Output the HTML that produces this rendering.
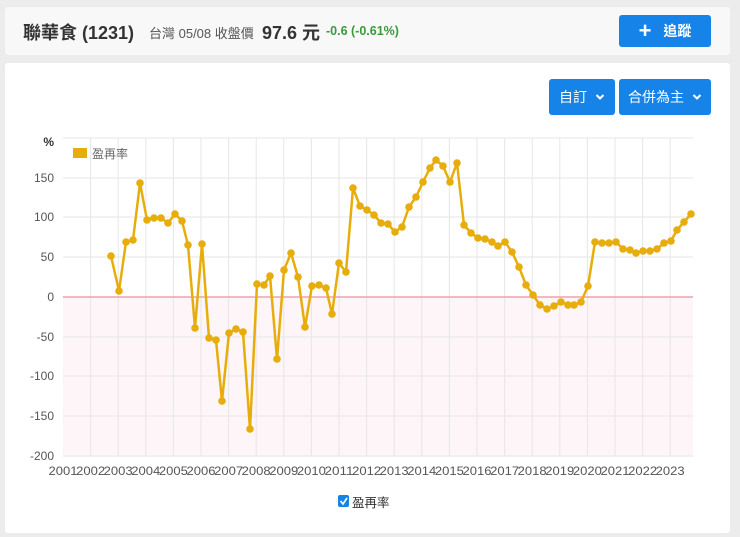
<!DOCTYPE html>
<html><head><meta charset="utf-8"><style>
body{margin:0;width:740px;height:537px;background:#ececec;font-family:"Liberation Sans","Noto Sans CJK TC",sans-serif;overflow:hidden;position:relative}
.card1{position:absolute;left:5px;top:7px;width:725px;height:48px;background:#f8f8f8;border-radius:3px}
.card2{position:absolute;left:5px;top:63px;width:725px;height:470px;background:#fff;border-radius:3px}
.btn{position:absolute;background:#1683e8;color:#fff;border-radius:3px;font-size:14px;font-weight:bold;display:flex;align-items:center;justify-content:center}
</style></head><body>
<div class="card1"></div>
<div style="position:absolute;left:23px;top:19px;font-size:18px;font-weight:bold;color:#333">聯華食 (1231)</div>
<div style="position:absolute;left:149px;top:23px;font-size:13px;color:#555">台灣 05/08 收盤價</div>
<div style="position:absolute;left:262px;top:19px;font-size:18px;font-weight:bold;color:#333">97.6 元</div>
<div style="position:absolute;left:326px;top:24px;font-size:12.5px;font-weight:bold;color:#3a9a3a">-0.6 (-0.61%)</div>
<div class="btn" style="left:619px;top:15px;width:92px;height:32px"><span style="font-size:22px;margin-right:12px;line-height:1">+</span>追蹤</div>
<div class="card2"></div>
<div class="btn" style="left:549px;top:79px;width:66px;height:36px;font-weight:normal">自訂<svg width="10" height="8" style="margin-left:8px"><path d="M1.5 2 L5 5.5 L8.5 2" stroke="#fff" stroke-width="2" fill="none"/></svg></div>
<div class="btn" style="left:619px;top:79px;width:92px;height:36px;font-weight:normal">合併為主<svg width="10" height="8" style="margin-left:8px"><path d="M1.5 2 L5 5.5 L8.5 2" stroke="#fff" stroke-width="2" fill="none"/></svg></div>
<svg style="position:absolute;left:0;top:0" width="740" height="537">
<rect x="63" y="297" width="630" height="159" fill="#fdf5f7"/>
<g stroke="#e6e6e6" stroke-width="1">
<line x1="63" y1="138" x2="693" y2="138"/><line x1="63" y1="178" x2="693" y2="178"/><line x1="63" y1="217" x2="693" y2="217"/><line x1="63" y1="257" x2="693" y2="257"/><line x1="63" y1="337" x2="693" y2="337"/><line x1="63" y1="376" x2="693" y2="376"/><line x1="63" y1="416" x2="693" y2="416"/><line x1="63" y1="456" x2="693" y2="456"/>
<g id="vg"></g>
</g>
<line x1="63" y1="297" x2="693" y2="297" stroke="#f0a0b0" stroke-width="1.5"/>
<g font-size="12" fill="#555" text-anchor="end">
<text x="54" y="146" font-weight="bold" fill="#333">%</text>
<text x="54" y="182">150</text><text x="54" y="221">100</text><text x="54" y="261">50</text><text x="54" y="301">0</text><text x="54" y="341">-50</text><text x="54" y="380">-100</text><text x="54" y="420">-150</text><text x="54" y="460">-200</text>
</g>
<g id="xl" font-size="11.5" fill="#555" text-anchor="middle"></g>
<rect x="73" y="148" width="14" height="10" fill="#e6ad0c"/>
<text x="92" y="158" font-size="12" fill="#666">盈再率</text>
<polyline id="pl" fill="none" stroke="#e6ad0c" stroke-width="2.5" stroke-linejoin="round"/>
<g id="dots" fill="#e6ad0c"></g>
<rect x="338" y="495" width="11" height="12" rx="2" fill="#1683e8"/>
<path d="M340.5 501 l2.5 3 l4-6" stroke="#fff" stroke-width="1.6" fill="none"/>
<text x="352" y="507" font-size="12.5" fill="#333">盈再率</text>
</svg>
<script>
var pts=[[111,256],[119,291],[126,242],[133,240],[140,183],[147,220],[154,218],[161,218],[168,223],[175,214],[182,221],[188,245],[195,328],[202,244],[209,338],[216,340],[222,401],[229,333],[236,329],[243,332],[250,429],[257,284],[264,285],[270,276],[277,359],[284,270],[291,253],[298,277],[305,327],[312,286],[319,285],[326,288],[332,314],[339,263],[346,272],[353,188],[360,206],[367,210],[374,215],[381,223],[388,224],[395,232],[402,227],[409,207],[416,197],[423,182],[430,168],[436,160],[443,166],[450,182],[457,163],[464,225],[471,233],[478,238],[485,239],[492,242],[498,246],[505,242],[512,252],[519,267],[526,285],[533,295],[540,305],[547,309],[554,306],[561,302],[568,305],[574,305],[581,302],[588,286],[595,242],[602,243],[609,243],[616,242],[623,249],[630,250],[636,253],[643,251],[650,251],[657,249],[664,243],[671,241],[677,230],[684,222],[691,214]];
document.getElementById('pl').setAttribute('points',pts.map(p=>p.join(',')).join(' '));
var ns='http://www.w3.org/2000/svg',d=document.getElementById('dots');
pts.forEach(p=>{var c=document.createElementNS(ns,'circle');c.setAttribute('cx',p[0]);c.setAttribute('cy',p[1]);c.setAttribute('r',3.8);d.appendChild(c);});
var vg=document.getElementById('vg'),xl=document.getElementById('xl');
for(var i=0;i<23;i++){var x=63+i*27.6;
var l=document.createElementNS(ns,'line');l.setAttribute('x1',x+27.6);l.setAttribute('x2',x+27.6);l.setAttribute('y1',138);l.setAttribute('y2',456);if(i<22)vg.appendChild(l);
var t=document.createElementNS(ns,'text');t.setAttribute('x',x);t.setAttribute('y',475);t.setAttribute('textLength',29);t.setAttribute('lengthAdjust','spacingAndGlyphs');t.textContent=2001+i;xl.appendChild(t);}
</script>
</body></html>
